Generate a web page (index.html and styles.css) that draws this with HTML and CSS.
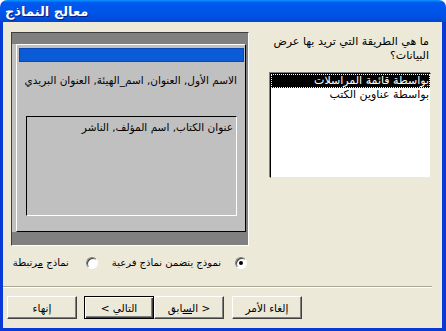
FILE: index.html
```html
<!DOCTYPE html>
<html lang="ar">
<head>
  <meta charset="UTF-8">
  <title>معالج النماذج</title>
  <link rel="stylesheet" href="styles.css">
</head>
<body>
<div class="window">
  <!-- Title bar -->
  <div class="titlebar">
    <span class="title" dir="rtl">معالج النماذج</span>
  </div>

  <div class="frame">
    <div class="top">
      <!-- Preview of the form layout -->
      <div class="preview">
        <div class="form">
          <div class="selbar"></div>
          <p class="fields" dir="rtl">الاسم الأول, العنوان, اسم_الهيئة, العنوان البريدي</p>
          <div class="subform">
            <p dir="rtl">عنوان الكتاب, اسم المؤلف, الناشر</p>
          </div>
        </div>
      </div>

      <!-- Question and list -->
      <div class="side">
        <p class="question" dir="rtl">ما هي الطريقة التي تريد بها عرض<br>البيانات؟</p>
        <ul class="listbox" dir="rtl">
          <li class="selected"><span>بواسطة قائمة المراسلات</span></li>
          <li><span>بواسطة عناوين الكتب</span></li>
        </ul>
      </div>
    </div>

    <!-- Options -->
    <div class="options" dir="rtl">
      <label class="option"><span class="radio checked"></span><span>نموذج يتضمن نماذج فرعية</span></label>
      <label class="option"><span class="radio"></span><span>نماذج <u>م</u>رتبطة</span></label>
    </div>

    <div class="separator"></div>

    <!-- Buttons -->
    <div class="buttons">
      <button class="btn finish" dir="rtl">إنهاء</button>
      <button class="btn default" dir="rtl">التالي &gt;</button>
      <button class="btn back" dir="rtl">&lt; ال<u>س</u>ابق</button>
      <button class="btn" dir="rtl">إلغاء الأمر</button>
    </div>
  </div>
</div>
</body>
</html>
```

FILE: styles.css
```css
/* Basic reset */
body {
  margin: 0;
  padding: 0;
  font-family: "DejaVu Sans", sans-serif;
  font-size: 11px;
  color: #000;
  background: #fff;
}
p {
  margin: 0;
}

/* Window shell */
.window {
  width: 446px;
  height: 331px;
  display: flex;
  flex-direction: column;
}
.titlebar {
  height: 22px;
  flex: none;
  display: flex;
  align-items: center;
  padding-left: 5px;
  border-radius: 7px 7px 0 0;
  background: linear-gradient(#0997ff 0%, #0058ee 12%, #0055ea 50%, #0050e0 80%, #0046cf 100%);
}
.title {
  color: #fff;
  font-weight: bold;
  font-size: 13px;
  text-shadow: 1px 1px #0a1e80;
}
.frame {
  flex: 1;
  display: flex;
  flex-direction: column;
  background: #ece9d8;
  border: solid #0a3ad6;
  border-width: 0 4px 3px 3px;
}

/* Top area */
.top {
  display: flex;
  padding: 10px 0 0 8px;
}

/* Preview panel */
.preview {
  width: 238px;
  height: 214px;
  box-sizing: border-box;
  background: #808080;
  border: 1px solid;
  border-color: #404040 #fff #fff #404040;
}
.form {
  height: 188px;
  box-sizing: border-box;
  margin: 11px 2px 0 4px;
  background: #c0c0c0;
  border: 1px solid;
  border-color: #fff #000 #000 #fff;
  box-shadow: -4px 0 0 #c0c0c0;
}
.selbar {
  height: 14px;
  margin: 3px 1px 0 2px;
  background: #0b5ad6;
  border: 1px solid #0847b4;
  box-sizing: border-box;
}
.fields {
  margin-top: 11px;
  padding-right: 8px;
  font-size: 10.5px;
  line-height: 14px;
  height: 14px;
  white-space: nowrap;
}
.subform {
  height: 100px;
  box-sizing: border-box;
  margin: 29px 8px 0 9px;
  border: 1px solid;
  border-color: #000 #fff #fff #000;
  padding: 3px 3px 0 0;
  font-size: 10.5px;
  line-height: 14px;
}

/* Right column */
.side {
  width: 161px;
  margin-left: 21px;
}
.question {
  margin-top: 3px;
  padding-right: 2px;
  line-height: 14px;
}
.listbox {
  list-style: none;
  margin: 10px 0 0 0;
  padding: 0;
  height: 105px;
  box-sizing: border-box;
  background: #fff;
  border: 1px solid;
  border-color: #000 #ece9d8 #ece9d8 #000;
  box-shadow: -1px -1px 0 #808080;
}
.listbox li {
  height: 14px;
  line-height: 13px;
  padding-right: 1px;
  white-space: nowrap;
}
.listbox li.selected {
  background: #000;
  color: #fff;
  outline: 1px dotted #fff;
  outline-offset: -1px;
}

/* Option buttons */
.options {
  display: flex;
  width: 238px;
  box-sizing: border-box;
  margin: 10px 0 0 8px;
  padding-right: 2px;
  height: 14px;
  align-items: center;
  gap: 14px;
  font-size: 10px;
}
.option {
  display: flex;
  align-items: center;
  gap: 14px;
  white-space: nowrap;
  line-height: 14px;
}
.option:last-child {
  gap: 17px;
}
.radio {
  width: 12px;
  height: 12px;
  box-sizing: border-box;
  border-radius: 50%;
  background: #fff;
  border: 1px solid;
  border-color: #808080 #fff #fff #808080;
  box-shadow: inset 1px 1px 0 #404040;
  display: flex;
  align-items: center;
  justify-content: center;
}
.radio.checked::after {
  content: "";
  width: 4px;
  height: 4px;
  border-radius: 50%;
  background: #000;
}

/* Separator */
.separator {
  margin: 16px 10px 0 0;
  border-top: 1px solid #aca899;
  border-bottom: 1px solid #fff;
}

/* Buttons */
.buttons {
  display: flex;
  margin-top: 8px;
  padding-left: 4px;
}
.btn {
  width: 70px;
  height: 23px;
  box-sizing: border-box;
  padding: 0;
  font-family: "DejaVu Sans", sans-serif;
  font-size: 10.5px;
  color: #000;
  background: #ece9d8;
  border: 1px solid;
  border-color: #fff #404040 #404040 #fff;
  box-shadow: inset -1px -1px 0 #808080;
}
.btn.finish {
  margin-right: 7px;
}
.btn.back {
  margin-right: 8px;
}
.btn.default {
  border: 1px solid #000;
  box-shadow: inset 1px 1px 0 #fff, inset -1px -1px 0 #404040, inset -2px -2px 0 #808080;
}
```
